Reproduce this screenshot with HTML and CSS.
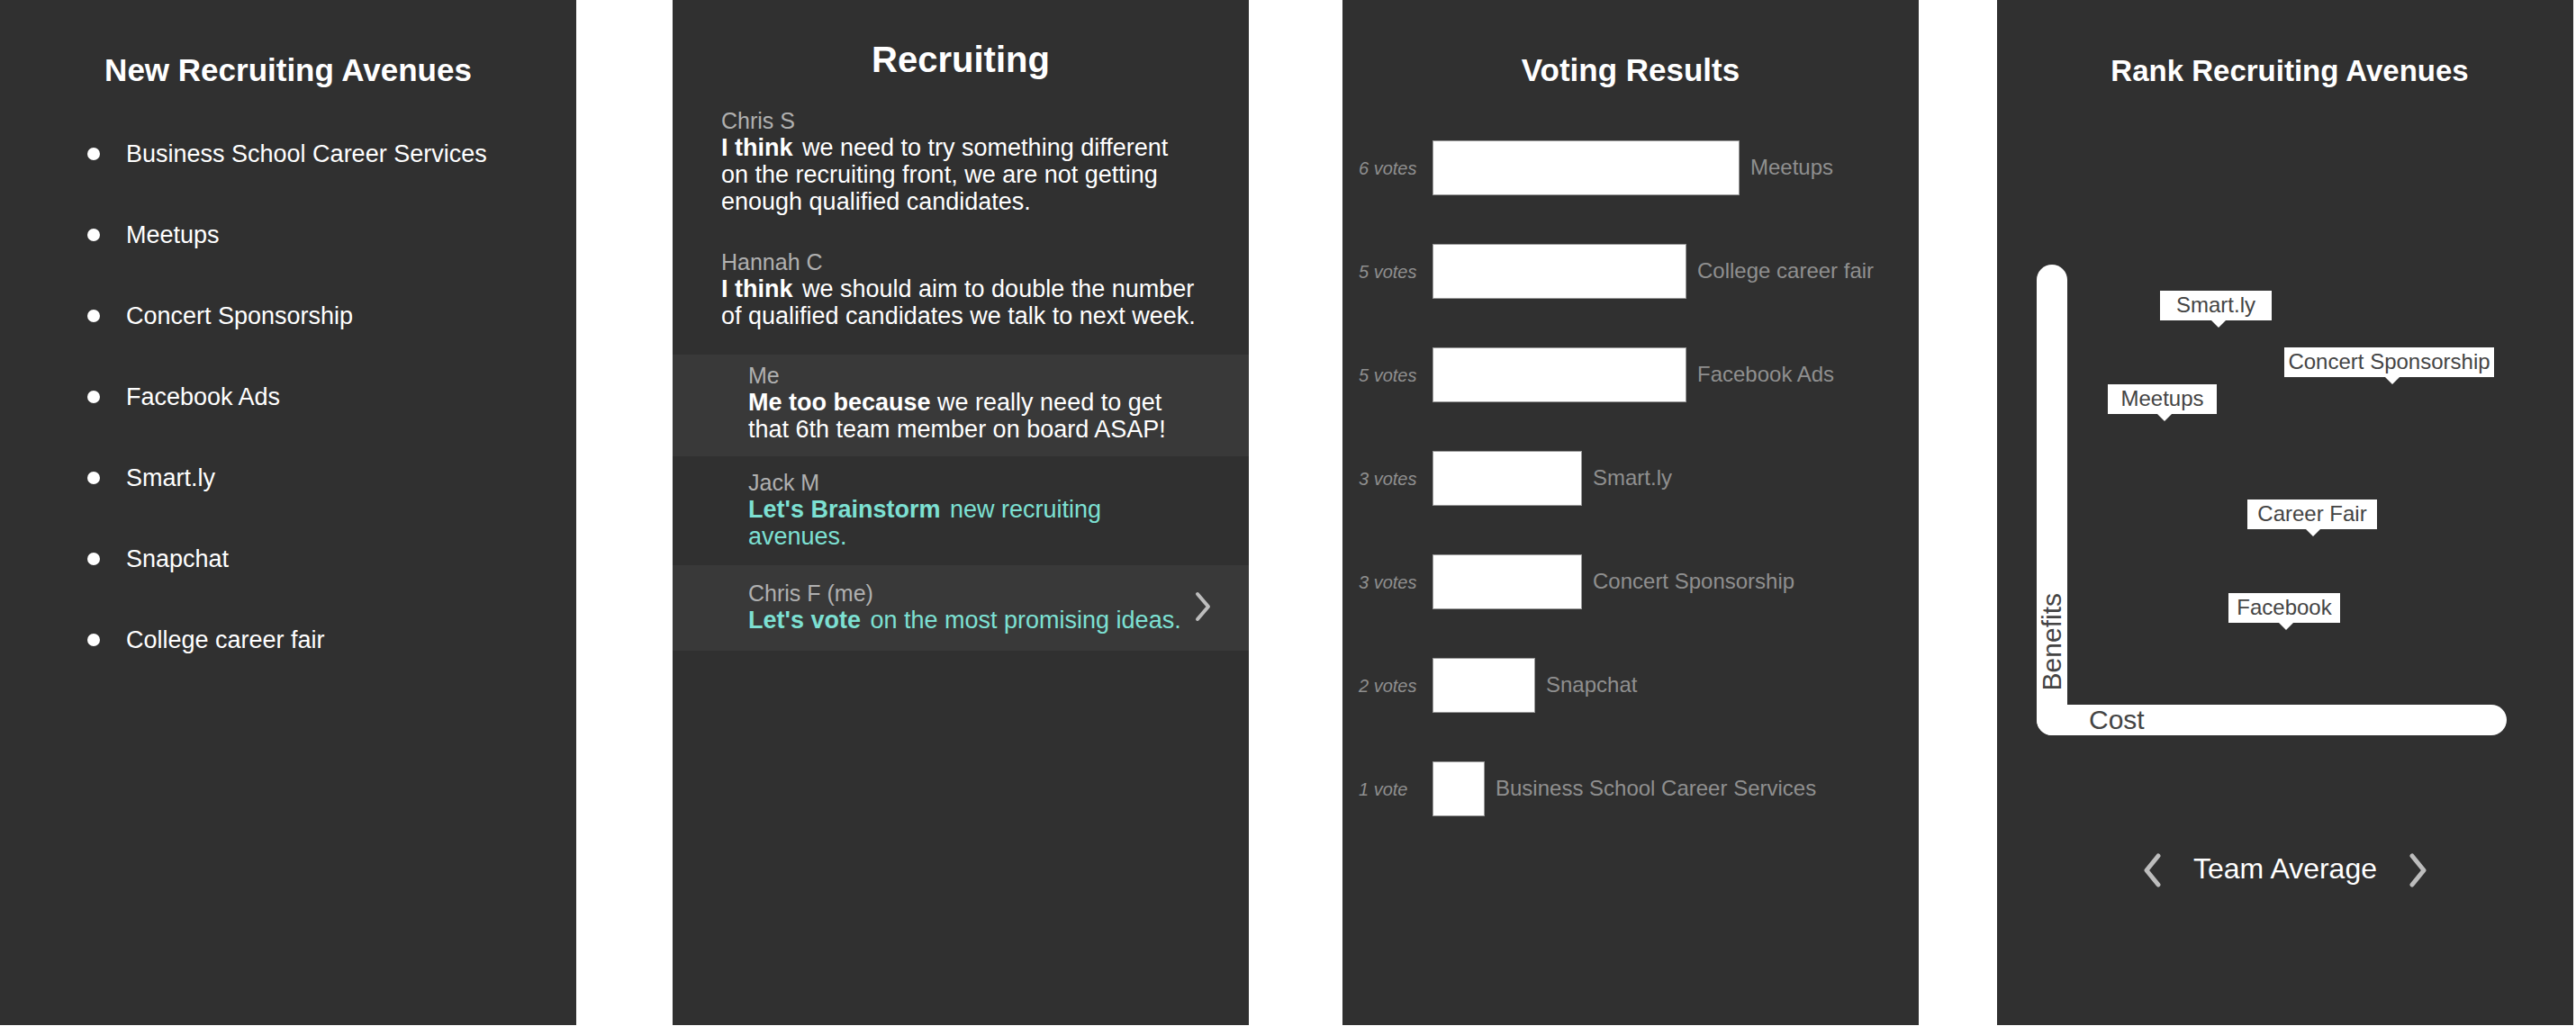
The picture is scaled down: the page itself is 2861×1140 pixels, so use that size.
FILE: index.html
```html
<!DOCTYPE html>
<html lang="en">
<head>
<meta charset="utf-8">
<meta name="viewport" content="width=device-width, initial-scale=1">
<title>Recruiting</title>
<link rel="stylesheet" href="styles.css">
</head>
<body>
<main class="screens">

  <section class="screen">
    <h2 class="title">New Recruiting Avenues</h2>
    <ul class="avenues">
      <li>Business School Career Services</li>
      <li>Meetups</li>
      <li>Concert Sponsorship</li>
      <li>Facebook Ads</li>
      <li>Smart.ly</li>
      <li>Snapchat</li>
      <li>College career fair</li>
    </ul>
  </section>

  <section class="screen screen-chat">
    <h1 class="title title-large">Recruiting</h1>
    <article class="message">
      <h3 class="author">Chris S</h3>
      <p><strong class="lead">I think</strong> we need to try something different on the recruiting front, we are not getting enough qualified candidates.</p>
    </article>
    <article class="message">
      <h3 class="author">Hannah C</h3>
      <p><strong class="lead">I think</strong> we should aim to double the number of qualified candidates we talk to next week.</p>
    </article>
    <article class="message reply mine">
      <h3 class="author">Me</h3>
      <p><strong>Me too because</strong> we really need to get that 6th team member on board ASAP!</p>
    </article>
    <article class="message reply activity">
      <h3 class="author">Jack M</h3>
      <p><strong class="lead">Let's Brainstorm</strong> new recruiting avenues.</p>
    </article>
    <article class="message reply activity mine with-action">
      <div>
        <h3 class="author">Chris F (me)</h3>
        <p><strong class="lead">Let's vote</strong> on the most promising ideas.</p>
      </div>
      <button class="arrow" type="button" aria-label="Open vote">
        <svg width="18" height="34" viewBox="0 0 18 34"><path d="M3 3 15 17 3 31"/></svg>
      </button>
    </article>
  </section>

  <section class="screen">
    <h2 class="title">Voting Results</h2>
    <ol class="results">
      <li><span class="votes">6 votes</span><span class="bar" style="width: 341px"></span><span class="name">Meetups</span></li>
      <li><span class="votes">5 votes</span><span class="bar" style="width: 282px"></span><span class="name">College career fair</span></li>
      <li><span class="votes">5 votes</span><span class="bar" style="width: 282px"></span><span class="name">Facebook Ads</span></li>
      <li><span class="votes">3 votes</span><span class="bar" style="width: 166px"></span><span class="name">Smart.ly</span></li>
      <li><span class="votes">3 votes</span><span class="bar" style="width: 166px"></span><span class="name">Concert Sponsorship</span></li>
      <li><span class="votes">2 votes</span><span class="bar" style="width: 114px"></span><span class="name">Snapchat</span></li>
      <li><span class="votes">1 vote</span><span class="bar" style="width: 58px"></span><span class="name">Business School Career Services</span></li>
    </ol>
  </section>

  <section class="screen">
    <h2 class="title title-rank">Rank Recruiting Avenues</h2>
    <div class="plot">
      <div class="axis axis-y"><span>Benefits</span></div>
      <div class="axis axis-x"><span>Cost</span></div>
      <div class="pin" style="left: 137px; top: 29px; width: 124px; --tip: 65px">Smart.ly</div>
      <div class="pin" style="left: 275px; top: 92px; width: 233px; --tip: 120px">Concert Sponsorship</div>
      <div class="pin" style="left: 79px; top: 133px; width: 121px; --tip: 63px">Meetups</div>
      <div class="pin" style="left: 234px; top: 261px; width: 144px; --tip: 73px">Career Fair</div>
      <div class="pin" style="left: 213px; top: 365px; width: 124px; --tip: 64px">Facebook</div>
    </div>
    <nav class="pager" aria-label="Ranking view">
      <button class="arrow" type="button" aria-label="Previous">
        <svg width="20" height="38" viewBox="0 0 20 38"><path d="M17 3 4 19 17 35"/></svg>
      </button>
      <span>Team Average</span>
      <button class="arrow" type="button" aria-label="Next">
        <svg width="20" height="38" viewBox="0 0 20 38"><path d="M3 3 16 19 3 35"/></svg>
      </button>
    </nav>
  </section>

</main>
</body>
</html>
```

FILE: styles.css
```css
* {
  box-sizing: border-box;
  margin: 0;
  padding: 0;
}

body {
  background: #fff;
  color: #fff;
  font: 27px/30px "Liberation Sans", Arial, sans-serif;
}

.screens {
  display: grid;
  grid-template-columns: 1fr 107px 1fr 104px 1fr 87px 1fr;
  min-height: 100vh;
  padding: 0 3px 1px 0;
}

.screen {
  background: #303030;
  padding-top: 58px;
}

.screen:nth-child(1) { grid-column: 1; }
.screen:nth-child(2) { grid-column: 3; }
.screen:nth-child(3) { grid-column: 5; }
.screen:nth-child(4) { grid-column: 7; }

.title {
  font-size: 35px;
  line-height: 40px;
  text-align: center;
}

.title-large {
  font-size: 40px;
  line-height: 46px;
}

.title-rank {
  font-size: 33px;
  line-height: 42px;
  padding-left: 10px;
}

/* Brainstormed avenues */
.avenues {
  display: flex;
  flex-direction: column;
  gap: 60px;
  margin-top: 58px;
  padding-left: 97px;
  list-style: none;
}

.avenues li {
  display: flex;
  align-items: center;
  gap: 29px;
}

.avenues li::before {
  content: "";
  width: 14px;
  height: 14px;
  border-radius: 50%;
  background: #fff;
}

/* Conversation */
.screen-chat {
  padding-top: 43px;
}

.message {
  padding: 30px 56px 7px 54px;
}

.message + .message {
  padding-bottom: 28px;
}

.author {
  color: #b0b0b0;
  font-size: 25px;
  font-weight: normal;
}

.lead {
  margin-right: 3px;
}

.message.reply {
  padding: 14px 66px 17px 84px;
}

.message.reply.mine {
  background: #393939;
  padding-top: 8px;
  padding-bottom: 15px;
}

.activity p {
  color: #7de0d3;
}

.message.reply.with-action {
  display: flex;
  align-items: center;
  justify-content: space-between;
  padding: 16px 42px 19px 84px;
}

.arrow {
  display: flex;
  border: 0;
  background: none;
  cursor: pointer;
}

.arrow path {
  fill: none;
  stroke: #bdbdbd;
  stroke-width: 4;
  stroke-linecap: round;
  stroke-linejoin: round;
}

/* Voting results */
.results {
  display: flex;
  flex-direction: column;
  gap: 54px;
  margin-top: 58px;
  padding-left: 18px;
  list-style: none;
  color: #8f8f8f;
}

.results li {
  display: flex;
  align-items: center;
}

.votes {
  flex: none;
  width: 82px;
  font-size: 20px;
  font-style: italic;
  line-height: 24px;
}

.bar {
  height: 61px;
  border: 1px solid #9a9a9a;
  background: #fff;
}

.name {
  padding: 0 0 2px 12px;
  font-size: 24px;
  line-height: 28px;
  white-space: nowrap;
}

/* Cost / benefit plot */
.plot {
  position: relative;
  display: grid;
  height: 523px;
  margin: 194px 74px 0 44px;
}

.axis {
  grid-area: 1 / 1;
  display: flex;
  background: #fff;
  color: #444;
  font-size: 30px;
  line-height: 34px;
}

.axis-y {
  justify-self: start;
  align-items: flex-end;
  width: 34px;
  padding-bottom: 50px;
  border-radius: 17px 17px 0 17px;
}

.axis-y span {
  writing-mode: vertical-rl;
  transform: rotate(180deg);
}

.axis-x {
  align-self: end;
  height: 34px;
  padding-left: 58px;
  border-radius: 0 17px 17px 17px;
}

.pin {
  position: absolute;
  height: 33px;
  background: #fff;
  color: #444;
  font-size: 24px;
  line-height: 32px;
  text-align: center;
  white-space: nowrap;
}

.pin::after {
  content: "";
  position: absolute;
  top: 100%;
  left: var(--tip);
  margin-left: -8px;
  border: 8px solid transparent;
  border-top-color: #fff;
  border-bottom: 0;
}

.pager {
  display: flex;
  align-items: center;
  justify-content: center;
  gap: 36px;
  margin-top: 127px;
  font-size: 32px;
  line-height: 38px;
}

.pager .arrow {
  padding-top: 4px;
}

.pager .arrow path {
  stroke-width: 5;
}
```
